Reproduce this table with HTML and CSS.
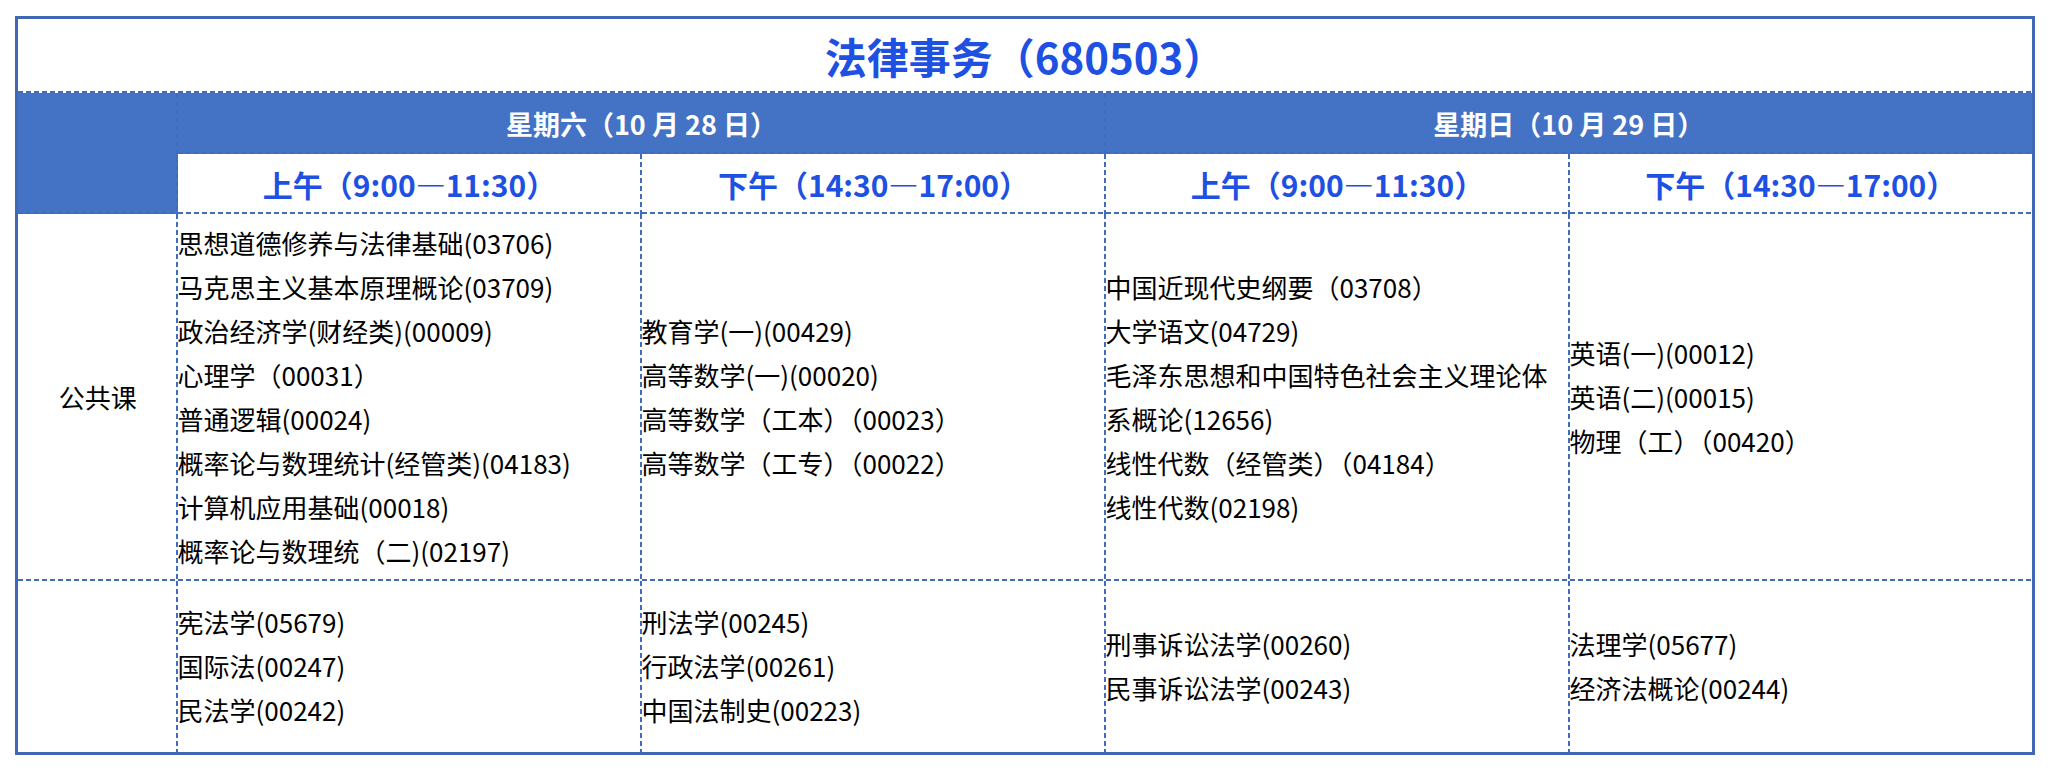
FILE: index.html
```html
<!DOCTYPE html>
<html lang="zh-CN">
<head>
<meta charset="utf-8">
<title>法律事务（680503）</title>
<link rel="stylesheet" href="styles.css">
</head>
<body>
<table class="schedule">
  <colgroup>
    <col class="col-cat">
    <col class="col-slot">
    <col class="col-slot">
    <col class="col-slot">
    <col class="col-slot">
  </colgroup>
  <tr class="row-title">
    <th colspan="5" class="title">法律事务（680503）</th>
  </tr>
  <tr class="row-day">
    <th rowspan="2" class="corner"></th>
    <th colspan="2" class="day">星期六（10 月 28 日）</th>
    <th colspan="2" class="day">星期日（10 月 29 日）</th>
  </tr>
  <tr class="row-time">
    <th class="time">上午（9:00—11:30）</th>
    <th class="time">下午（14:30—17:00）</th>
    <th class="time">上午（9:00—11:30）</th>
    <th class="time">下午（14:30—17:00）</th>
  </tr>
  <tr class="row-public">
    <td class="cat">公共课</td>
    <td class="list">
      <div>思想道德修养与法律基础(03706)</div>
      <div>马克思主义基本原理概论(03709)</div>
      <div>政治经济学(财经类)(00009)</div>
      <div>心理学（00031）</div>
      <div>普通逻辑(00024)</div>
      <div>概率论与数理统计(经管类)(04183)</div>
      <div>计算机应用基础(00018)</div>
      <div>概率论与数理统（二)(02197)</div>
    </td>
    <td class="list">
      <div>教育学(一)(00429)</div>
      <div>高等数学(一)(00020)</div>
      <div>高等数学（工本）（00023）</div>
      <div>高等数学（工专）（00022）</div>
    </td>
    <td class="list">
      <div>中国近现代史纲要（03708）</div>
      <div>大学语文(04729)</div>
      <div>毛泽东思想和中国特色社会主义理论体系概论(12656)</div>
      <div>线性代数（经管类）（04184）</div>
      <div>线性代数(02198)</div>
    </td>
    <td class="list">
      <div>英语(一)(00012)</div>
      <div>英语(二)(00015)</div>
      <div>物理（工）（00420）</div>
    </td>
  </tr>
  <tr class="row-major">
    <td class="cat"></td>
    <td class="list">
      <div>宪法学(05679)</div>
      <div>国际法(00247)</div>
      <div>民法学(00242)</div>
    </td>
    <td class="list">
      <div>刑法学(00245)</div>
      <div>行政法学(00261)</div>
      <div>中国法制史(00223)</div>
    </td>
    <td class="list">
      <div>刑事诉讼法学(00260)</div>
      <div>民事诉讼法学(00243)</div>
    </td>
    <td class="list">
      <div>法理学(05677)</div>
      <div>经济法概论(00244)</div>
    </td>
  </tr>
</table>
</body>
</html>
```
FILE: styles.css
```css
html {
  background: #ffffff;
}

body {
  margin: 0;
  padding: 16px 0 0 15px;
  font-family: "Noto Sans CJK SC", "Noto Sans", sans-serif;
  color: #000000;
}

.schedule {
  width: 2017px;
  table-layout: fixed;
  border-collapse: collapse;
  border: 3px solid #4068b4;
}

.col-cat {
  width: 161px;
}

.col-slot {
  width: 464px;
}

.schedule th,
.schedule td {
  --line-r: none;
  --line-b: none;
  border: none;
  padding: 0;
  vertical-align: middle;
  background-image: var(--line-r), var(--line-b);
  background-position: right top, left bottom;
  background-size: 2px 100%, 100% 2px;
  background-repeat: no-repeat;
}

.schedule th:not(:last-child),
.schedule td:not(:last-child) {
  --line-r: repeating-linear-gradient(to bottom, #3f6cbb 0 5px, transparent 5px 8px);
}

.schedule tr:not(.row-major) > th,
.schedule tr:not(.row-major) > td {
  --line-b: repeating-linear-gradient(to right, #3f6cbb 0 5px, transparent 5px 8px);
}

.row-title {
  height: 75px;
}

.row-day {
  height: 61px;
}

.row-time {
  height: 60px;
}

.row-public {
  height: 367px;
}

.row-major {
  height: 173px;
}

.title {
  font-size: 42px;
  font-weight: 700;
  color: #1e50e2;
  text-align: center;
  line-height: 1.2;
}

.corner {
  background-color: #4472c4;
}

.day {
  background-color: #4472c4;
  color: #ffffff;
  font-size: 27px;
  font-weight: 700;
  text-align: center;
}

.time {
  font-size: 30px;
  font-weight: 700;
  color: #1e50e2;
  text-align: center;
}

.cat {
  font-size: 26px;
  text-align: center;
  line-height: 44px;
}

.list {
  font-size: 26px;
  line-height: 44px;
  padding: 0 6px 0 6px;
  text-align: left;
}
```
